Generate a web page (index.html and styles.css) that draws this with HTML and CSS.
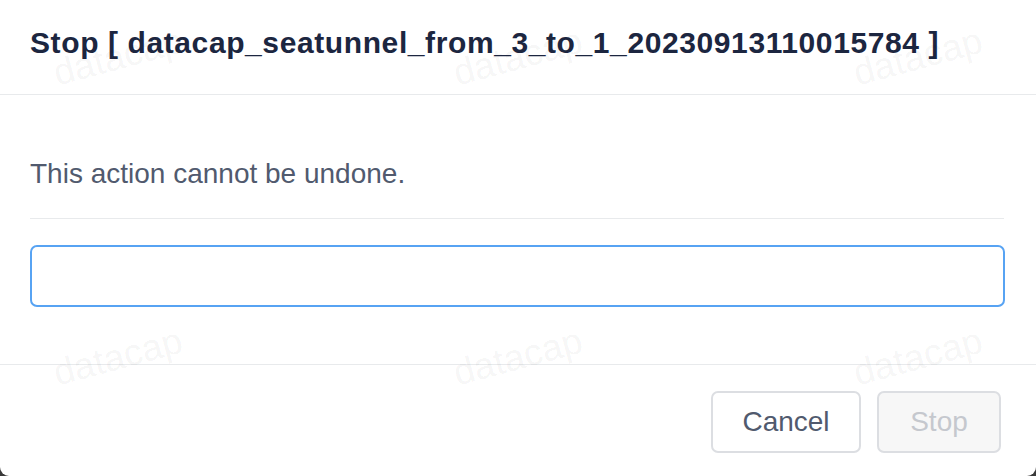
FILE: index.html
```html
<!DOCTYPE html>
<html lang="en">
<head>
<meta charset="utf-8">
<title>Stop</title>
<link rel="stylesheet" href="styles.css">
</head>
<body>
<div class="modal">
  <div class="modal-header">
    <div class="modal-title">Stop [ datacap_seatunnel_from_3_to_1_20230913110015784 ]</div>
  </div>
  <div class="modal-body">
    <p class="message">This action cannot be undone.</p>
    <div class="divider"></div>
    <input class="confirm-input" type="text">
  </div>
  <div class="modal-footer">
    <button class="btn btn-default" type="button">Cancel</button>
    <button class="btn btn-disabled" type="button" disabled>Stop</button>
  </div>
  <div class="watermark">
    <span class="wm">datacap</span>
    <span class="wm">datacap</span>
    <span class="wm">datacap</span>
    <span class="wm">datacap</span>
    <span class="wm">datacap</span>
    <span class="wm">datacap</span>
  </div>
</div>
</body>
</html>
```
FILE: styles.css
```css
* { box-sizing: border-box; }
html, body { margin: 0; padding: 0; }
body {
  background: #3a3a3a;
  font-family: "Liberation Sans", Arial, sans-serif;
  width: 1036px;
  height: 476px;
  overflow: hidden;
}
.modal {
  position: relative;
  width: 1036px;
  height: 476px;
  background: #fff;
  border-radius: 0 0 9px 9px;
  overflow: hidden;
}
.modal-header {
  height: 95px;
  border-bottom: 1px solid #e8eaec;
  padding: 26px 30px 0;
}
.modal-title {
  font-size: 30px;
  line-height: 34px;
  font-weight: 700;
  letter-spacing: 0.6px;
  color: #1c2640;
  white-space: nowrap;
}
.modal-body {
  padding: 63px 32px 0 30px;
  height: 270px;
  border-bottom: 1px solid #e8eaec;
}
.message {
  margin: 0;
  font-size: 28px;
  line-height: 32px;
  color: #515a6e;
}
.divider {
  height: 1px;
  background: #e8eaec;
  margin-top: 28px;
}
.confirm-input {
  display: block;
  width: 975px;
  height: 62px;
  margin-top: 26px;
  border: 2px solid #57a3f3;
  border-radius: 7px;
  background: #fff;
  outline: none;
  font-family: inherit;
  font-size: 28px;
  padding: 0 14px;
}
.modal-footer {
  display: flex;
  justify-content: flex-end;
  gap: 16px;
  padding: 26px 35px 0 0;
}
.btn {
  height: 62px;
  border-radius: 7px;
  font-family: inherit;
  font-size: 28px;
  padding: 0 0 1px;
  background: #fff;
}
.btn-default {
  width: 150px;
  border: 2px solid #dcdee2;
  color: #515a6e;
}
.btn-disabled {
  width: 124px;
  border: 2px solid #dcdee2;
  background: #f7f7f7;
  color: #c5c8ce;
}
.watermark {
  position: absolute;
  inset: 0;
  pointer-events: none;
  display: grid;
  grid-template-columns: repeat(3, 400px);
  grid-auto-rows: 300px;
  padding: 26px 0 0 52px;
}
.wm {
  display: block;
  width: 140px;
  height: 60px;
  font-size: 37px;
  line-height: 60px;
  color: rgba(0, 0, 0, 0.05);
  transform: rotate(-15deg);
  transform-origin: 50% 50%;
}
```
